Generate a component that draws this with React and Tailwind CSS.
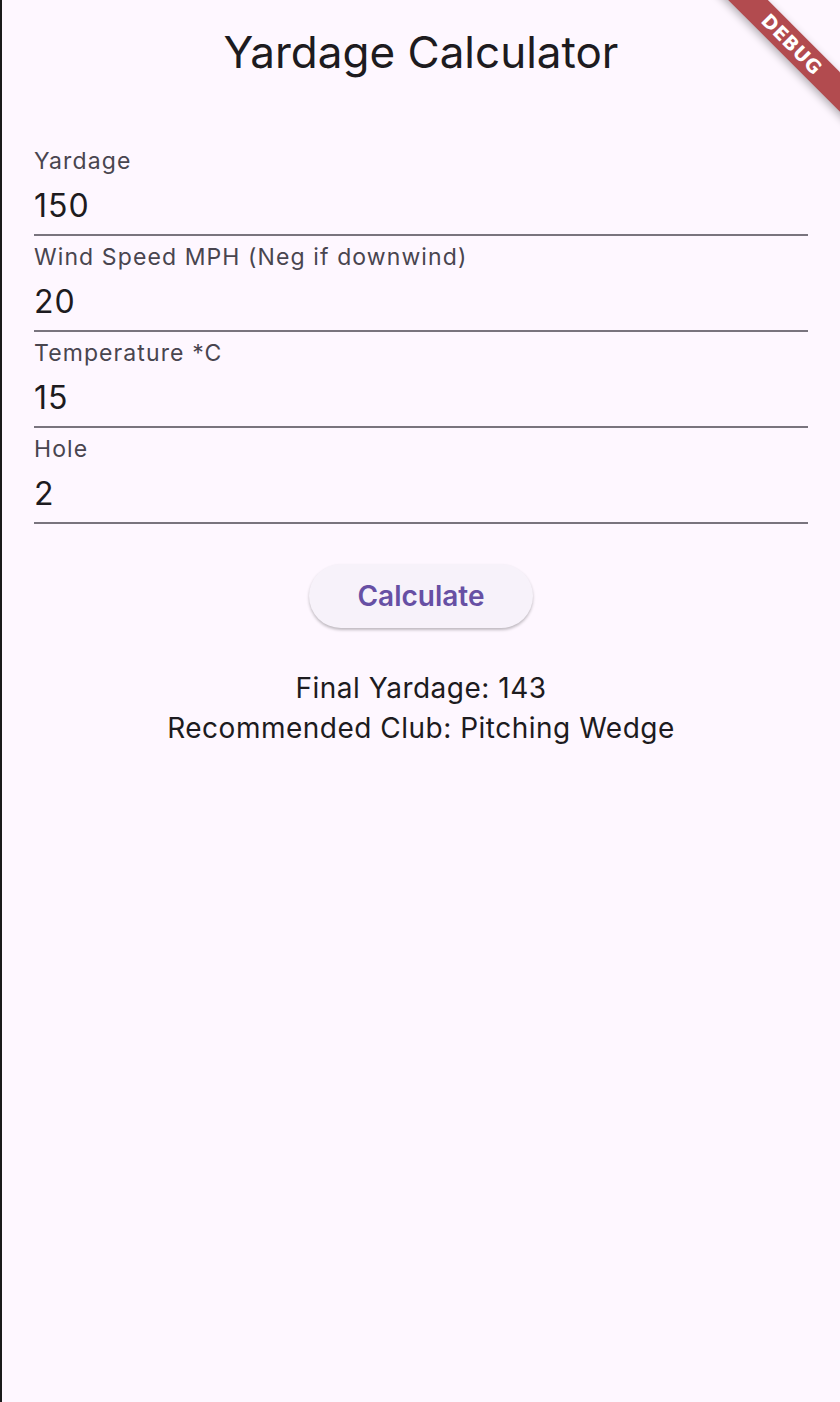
import React, { useState } from 'react';

const fields = [
    { label: 'Yardage', value: '150' },
    { label: 'Wind Speed MPH (Neg if downwind)', value: '20' },
    { label: 'Temperature *C', value: '15' },
    { label: 'Hole', value: '2' },
];

const Field = ({ label, value }) => (
    <div className="flex flex-col h-[96px] border-b-2 border-[#79747e]">
        <label className="text-[23px] leading-none text-[#49454f] pt-[10px] tracking-[1.1px]">{label}</label>
        <p className="text-[32px] leading-none text-[#1d1b20] mt-[17px] tracking-[1px]">{value}</p>
    </div>
);

const App = () => {
    const [values] = useState(fields);

    return (
        <div
            className="relative min-h-screen overflow-hidden bg-[#fef7ff] border-l-2 border-[#1a1a1a]"
            style={{ fontFamily: 'Inter, "Noto Sans", sans-serif' }}
        >
            <h1 className="text-center text-[44px] leading-none text-[#1d1b20] pt-[30px]">Yardage Calculator</h1>

            <main className="px-[32px] mt-[66px]">
                {values.map((f) => (
                    <Field key={f.label} label={f.label} value={f.value} />
                ))}

                <div className="flex justify-center mt-[40px]">
                    <button className="w-[224px] h-[64px] rounded-full bg-[#f7f2fa] text-[#6750a4] text-[28px] font-semibold shadow-[0_2px_3px_rgba(0,0,0,0.25)]">
                        Calculate
                    </button>
                </div>

                <div className="mt-[40px] flex flex-col items-center text-[28px] leading-[40px] text-[#1d1b20] tracking-[0.5px]">
                    <p>Final Yardage: 143</p>
                    <p>Recommended Club: Pitching Wedge</p>
                </div>
            </main>

            {/* debug banner */}
            <div className="absolute left-[690px] top-[30px] w-[200px] h-[28px] rotate-45 bg-[#b24b4f] shadow-[0_3px_8px_rgba(0,0,0,0.3)] flex items-center justify-center">
                <span className="text-white text-[19px] font-extrabold tracking-[0.5px] leading-none" style={{ fontFamily: '"DejaVu Sans", sans-serif' }}>DEBUG</span>
            </div>
        </div>
    );
};

export default App;
